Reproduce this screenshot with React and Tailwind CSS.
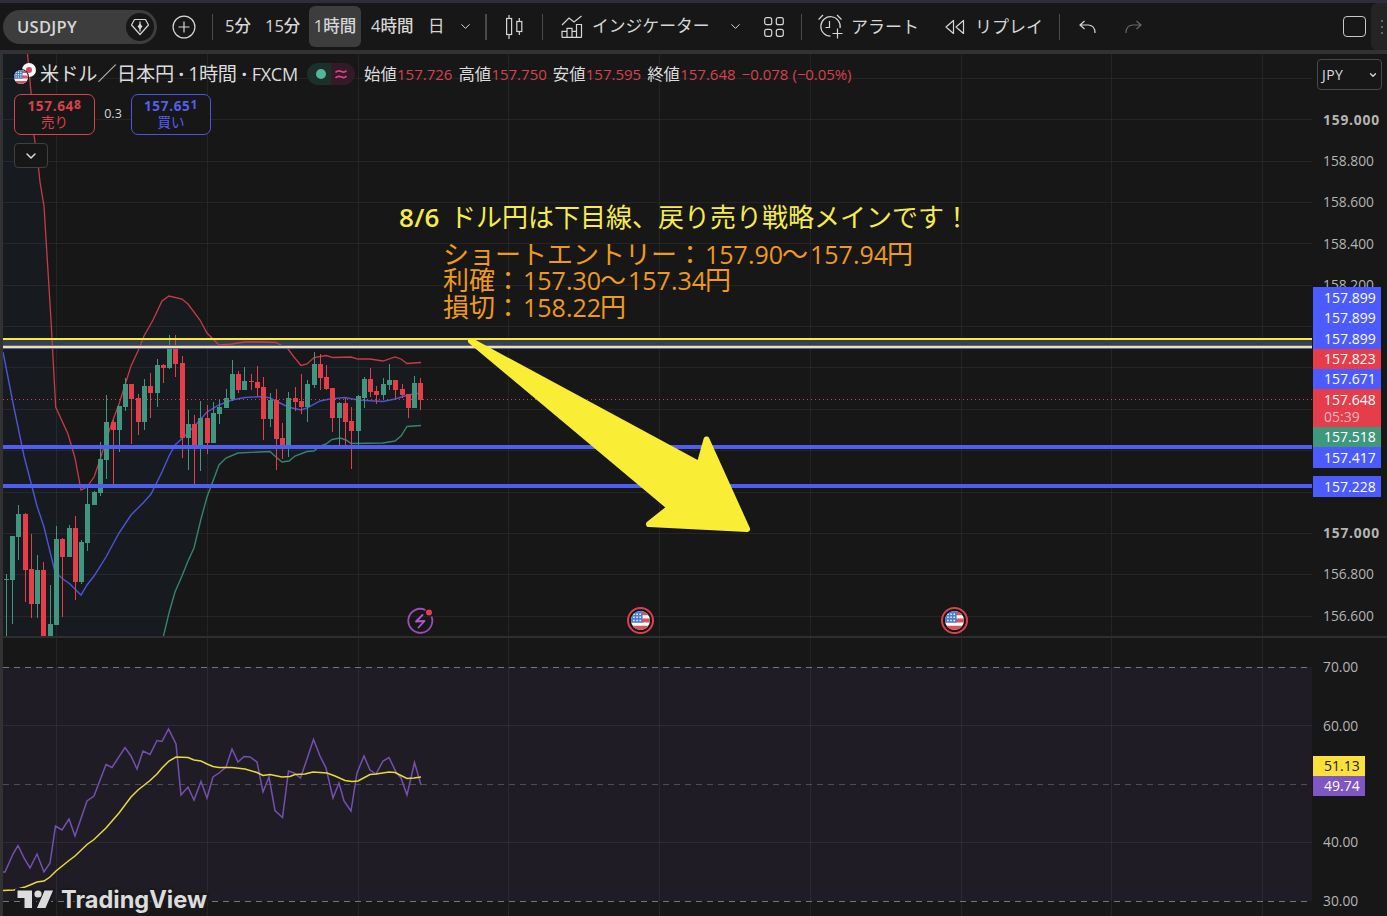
import { ChevronDown } from 'lucide-react';

// [high, low, bodyTop, bodyBottom, up]
const candles = [
  [574, 636, 579, 580, 1], [536, 624, 536, 580, 1], [505, 560, 514, 537, 1], [513, 602, 514, 570, 0],
  [534, 618, 569, 604, 0], [555, 618, 570, 604, 1], [562, 636, 570, 636, 0], [585, 636, 624, 636, 1],
  [526, 625, 539, 625, 1], [538, 617, 539, 557, 0], [525, 557, 528, 557, 1], [516, 600, 528, 582, 0],
  [540, 584, 542, 582, 1], [486, 551, 504, 543, 1], [491, 505, 492, 505, 1], [442, 496, 459, 493, 1],
  [395, 479, 422, 460, 1], [420, 485, 422, 430, 0], [406, 452, 406, 430, 1], [378, 411, 384, 407, 1],
  [384, 444, 384, 399, 0], [394, 435, 398, 422, 0], [379, 430, 386, 422, 1], [373, 418, 386, 393, 0],
  [359, 407, 365, 393, 1], [364, 383, 365, 368, 0], [335, 369, 348, 368, 1], [335, 377, 348, 364, 0],
  [356, 458, 363, 438, 0], [410, 470, 424, 438, 1], [415, 485, 424, 446, 0], [401, 471, 418, 446, 1],
  [405, 454, 418, 443, 0], [402, 443, 413, 443, 1], [399, 424, 407, 414, 1], [389, 408, 398, 408, 1],
  [360, 401, 374, 399, 1], [371, 393, 374, 390, 0], [367, 390, 381, 390, 1], [374, 390, 381, 382, 0],
  [366, 396, 382, 388, 0], [377, 440, 387, 419, 0], [393, 427, 400, 419, 1], [389, 470, 400, 439, 0],
  [423, 459, 438, 446, 0], [392, 457, 398, 446, 1], [387, 411, 398, 402, 0], [374, 414, 401, 407, 0],
  [380, 422, 384, 407, 1], [352, 388, 364, 385, 1], [354, 390, 364, 378, 0], [365, 390, 377, 389, 0],
  [388, 432, 388, 418, 0], [402, 446, 403, 418, 1], [398, 445, 403, 422, 0], [407, 469, 421, 431, 0],
  [395, 446, 396, 431, 1], [377, 408, 379, 398, 1], [368, 397, 379, 392, 0], [386, 404, 391, 395, 0],
  [378, 400, 384, 395, 1], [364, 390, 380, 385, 1], [380, 399, 380, 390, 0], [384, 398, 389, 395, 0],
  [394, 418, 394, 408, 0], [376, 408, 383, 408, 1], [378, 410, 383, 400, 0],
];

const upperBand =
  '27.5,54 31,92 34,135 38,163 40,182 44,206 51,320 55.7,407 68,434 75,458 81,490 87,487 94,477 100,460 106,440 113,420 119,404 125,385 131,366 138,351 144,336 153,320 162,301 169,296 182,299 188,304 200,320 207,333 219,345 232,344 245,342 263,342 276,342.5 288,349 294,357 301,365.5 307,364 314,357.5 326,355.5 333,357.5 351,357 358,359 370,359 383,361 395,357 401,359 407,363.5 421,362.5';
const midBand =
  '3,352 13,403 24,456 37,506 44,527 55,572 63,579 70,584 81,595 87,585 94,576 106,557 119,533 131,515 144,502 151,494 162,472 169,456 175,445 188,433 200,420 207,412 219,405 232,400 245,397.5 263,396.5 270,398 282,404 288,407 301,410 307,408 320,401 330,399 345,397.5 358,400 383,401.5 395,399 408,395 414,394 421,393';
const lowerBand =
  '163.5,636 169,613 175,592 182,576 188,561 194,548 201,519 207,497 219,465 226,458 238,453 270,451.5 276,457 282,462 289,461 295,456 307,451.5 314,451 320,446 326,444 332,439.5 340,438 346,440 351,443.5 383,443 395,441 401,436 407,426.5 421,425.5';
const bandFill = `${upperBand} ${lowerBand.split(' ').reverse().join(' ')} 3,636 3,54`;

const rsiLine =
  '3,872 5,872 13,854 18,845.5 24,858 30,868 37,854 44,872 50,863 55.5,826 62,830 69,819 75,836 87,801 94,796 106,764.5 112,767.5 125,747.5 131,756 137,769 143,751 150,754.5 157,740.5 162,741.5 168.5,729 176,744 181,795 188,787 194,800 201,781.5 207,798 213,777 219,773 226,767 232,749 238,762 244,756.5 250,757 257,762 263,792 269,777 275,810.5 282.5,817.5 288.5,771 294,773 300.5,778 307,759 313.5,739.5 320,756 326,768 333,798 339,783 344,801 351,811 357,773 364,756 370,770 376,774 383,761 389,757.5 396,772 401,778 407,795 414.5,762.5 421,785';
const rsiAverage =
  '3,890.5 14,890 25,887 30,885 37,882 44,881 50,877 56,871 69,860.5 75,856 87,844.5 94,839.5 106,828 119,813 131,797 138,790 150,780.5 157,774 162,768 169,761 176,757 188,757.5 194,760 201,761 207,764 213,766.5 219,767.5 232,767.5 245,769 257,772.5 263,775.5 270,774.5 282,777 290,776.5 295,774.5 305,774 313,772 327,773 335,776 345,780.5 352,781.5 358,781 370,774.5 376,774 389,772 395,772.5 401,775.5 407,778.5 414,778 421,777';

const gridX = [56, 207, 358, 508, 659, 810, 961, 1111, 1262];
const gridY = [78, 119, 161, 202, 243, 285, 326, 367, 409, 450, 492, 533, 574, 616];

// empty rows sit behind the price tags
const ticks = ['159.000', '158.800', '158.600', '158.400', '158.200', '', '', '', '', '', '157.000', '156.800', '156.600'];

const ohlc = [
  ['始値', '157.726'],
  ['高値', '157.750'],
  ['安値', '157.595'],
  ['終値', '157.648'],
];

function PriceChart() {
  return (
    <svg width="1309" height="582" viewBox="3 54 1309 582" className="block">
      <polygon points={bandFill} fill="#171b1f" />
      <g fill="#ffffff" fillOpacity="0.06" shapeRendering="crispEdges">
        {gridX.map((x) => <rect key={x} x={x} y="54" width="1" height="582" />)}
        {gridY.map((y) => <rect key={y} x="3" y={y} width="1309" height="1" />)}
      </g>
      {/* entry zone */}
      <rect x="3" y="340" width="1309" height="5" fill="#3a3e49" />
      <polyline points={upperBand} fill="none" stroke="#c93a4a" strokeWidth="1.3" />
      <polyline points={midBand} fill="none" stroke="#4c55d6" strokeWidth="1.4" />
      <polyline points={lowerBand} fill="none" stroke="#37836d" strokeWidth="1.4" />
      <g shapeRendering="crispEdges">
        {candles.map(([high, low, top, bottom, up], i) => {
          const x = Math.floor(6.22 + i * 6.283);
          return (
            <g key={i} fill={up ? '#41967f' : '#e63d4b'}>
              <rect x={x} y={high} width="1" height={low - high} />
              <rect x={x - 2} y={top} width="5" height={bottom - top} />
            </g>
          );
        })}
        {/* last price */}
        <line x1="3" x2="1312" y1="399.5" y2="399.5" stroke="#c94656" strokeDasharray="1 3" />
        <rect x="3" y="338" width="1309" height="2" fill="#f5ec3c" />
        <rect x="3" y="345" width="1309" height="4" fill="#4f5cd8" />
        <rect x="3" y="346" width="1309" height="2" fill="#f3e873" />
        {/* take profit levels */}
        <rect x="3" y="445" width="1309" height="4" fill="#4f5df0" />
        <rect x="3" y="484" width="1309" height="4" fill="#4f5df0" />
      </g>
      <polygon
        points="471,341 699.5,464.5 706.5,439.5 747,529 649,524 670,507.5"
        fill="#f9ee35"
        stroke="#f9ee35"
        strokeWidth="6"
        strokeLinejoin="round"
      />
    </svg>
  );
}

function RsiChart() {
  return (
    <svg width="1309" height="278" viewBox="3 638 1309 278" className="block">
      <rect x="3" y="667" width="1309" height="234" fill="#201c26" />
      <g fill="#ffffff" fillOpacity="0.06" shapeRendering="crispEdges">
        {gridX.map((x) => <rect key={x} x={x} y="638" width="1" height="278" />)}
        <rect x="3" y="725" width="1309" height="1" />
        <rect x="3" y="842" width="1309" height="1" />
      </g>
      <g strokeDasharray="6 5" shapeRendering="crispEdges">
        <line x1="3" x2="1308" y1="667.5" y2="667.5" stroke="#77757b" />
        <line x1="3" x2="1308" y1="784.5" y2="784.5" stroke="#4f4c55" />
        <line x1="3" x2="1308" y1="901.5" y2="901.5" stroke="#77757b" />
      </g>
      <polyline points={rsiLine} fill="none" stroke="#7450ae" strokeWidth="1.5" />
      <polyline points={rsiAverage} fill="none" stroke="#e8da3c" strokeWidth="1.5" />
      <g fill="#dcdcdc" stroke="#1b191e" strokeWidth="5" strokeLinejoin="round" paintOrder="stroke">
        <path d="M17.500 890.500H32V908H24.500V898H17.500Z" />
        <path d="M44.500 890.500H53L45.500 908H37Z" />
        <circle cx="38" cy="894" r="3.600" strokeWidth="2" />
        <text x="61" y="908" textLength="146" lengthAdjust="spacingAndGlyphs" className="font-['Inter'] text-[24px] font-bold">
          TradingView
        </text>
      </g>
    </svg>
  );
}

function FlagUs({ size }) {
  return (
    <svg width={size} height={size} viewBox="0 0 18 18">
      <clipPath id="usClip"><circle cx="9" cy="9" r="9" /></clipPath>
      <g clipPath="url(#usClip)">
        <rect width="18" height="18" fill="#fff" />
        <path d="M0 1h18v3H0zM0 7h18v4H0zM0 14h18v4H0z" fill="#dd5258" />
        <rect width="11" height="11" fill="#4a80d4" />
        <path d="M2 3h1.500M5 3h1.500M8 3h1.500M2 6h1.500M5 6h1.500M8 6h1.500M2 9h1.500M5 9h1.500M8 9h1.500" stroke="#e8f0ff" strokeWidth="1.400" />
      </g>
    </svg>
  );
}

function EventFlag() {
  return (
    <div className="flex size-[27px] items-center justify-center rounded-full border-2 border-[#d6434f] bg-[#171717]">
      <FlagUs size={19} />
    </div>
  );
}

function Divider({ className }) {
  return <div className={`h-[26px] shrink-0 bg-[#4a4a4a] ${className}`} />;
}

function Toolbar() {
  return (
    <div className="flex h-[47px] items-center bg-[#171717] text-[16.5px] leading-none text-[#d6d6d6]">
      <div className="ml-[3px] flex h-[34px] w-[154px] shrink-0 items-center justify-between rounded-full bg-[#3d3d3d] pr-[3px] pl-[14px]">
        <span className="pt-px text-[16.5px] font-semibold tracking-[0.3px]">USDJPY</span>
        <span className="flex size-[28px] items-center justify-center rounded-full bg-[#171717]">
          <svg width="20" height="18" viewBox="0 0 20 18" fill="none" stroke="currentColor" strokeWidth="1.200">
            <path d="M4.500 1.500h11L18.500 7 10 16.500 1.500 7z" strokeLinejoin="round" />
            <path d="M10 3.500v10" />
            <path d="M10 5.500l2.500 3-2.500 3-2.500-3z" fill="currentColor" stroke="none" />
          </svg>
        </span>
      </div>
      <svg className="ml-[15px] shrink-0" width="24" height="24" viewBox="0 0 24 24" fill="none" stroke="currentColor" strokeWidth="1.200">
        <circle cx="12" cy="12" r="10.900" />
        <path d="M12 6.500v11M6.500 12h11" />
      </svg>
      <Divider className="ml-4 w-px" />

      <span className="ml-[12px] w-[40px] shrink-0 font-medium">5分</span>
      <span className="w-[44px] shrink-0 font-medium whitespace-nowrap">15分</span>
      <span className="flex h-[41px] w-[52px] shrink-0 items-center justify-center rounded-md bg-[#3d3d3d] font-medium whitespace-nowrap">1時間</span>
      <span className="ml-[10px] w-[57px] shrink-0 font-medium whitespace-nowrap">4時間</span>
      <span className="w-[29px] shrink-0">日</span>
      <ChevronDown className="ml-px shrink-0" size={15} strokeWidth={1.6} />
      <Divider className="ml-[12px] w-[2px]" />

      <svg className="ml-[19px] shrink-0" width="17" height="24" viewBox="0 0 17 24" fill="none" stroke="currentColor" strokeWidth="1.200">
        <rect x="0.600" y="3.500" width="5" height="16" />
        <path d="M3 0v3.500M3 19.500V24M13.300 3v3.500M13.300 16.500V20" />
        <rect x="10.800" y="6.500" width="5" height="10" />
      </svg>
      <Divider className="ml-[19px] w-px" />

      <svg className="ml-[18px] shrink-0" width="22" height="24" viewBox="0 0 22 24" fill="none" stroke="currentColor" strokeWidth="1.200">
        <path d="M1 10l7-7 5 4 7.500-6" />
        <path d="M1 22.400v-6h5v6M6 16.400v-3h5v9M11 16.400h5M15.500 22.400V9.500h5v13M1 22.400h19.500" />
      </svg>
      <span className="ml-[9px] w-[128px] shrink-0 text-[16.8px] whitespace-nowrap">インジケーター</span>
      <ChevronDown className="ml-[8px] shrink-0" size={15} strokeWidth={1.6} />
      <svg className="ml-[21px] shrink-0" width="20" height="20" viewBox="0 0 20 20" fill="none" stroke="currentColor" strokeWidth="1.200">
        <rect x="0.700" y="0.700" width="7" height="7" rx="2" />
        <rect x="12.300" y="0.700" width="7" height="7" rx="2" />
        <rect x="0.700" y="12.300" width="7" height="7" rx="2" />
        <rect x="12.300" y="12.300" width="7" height="7" rx="2" />
      </svg>
      <Divider className="ml-[17px] w-px" />

      <svg className="ml-[16px] shrink-0" width="25" height="25" viewBox="0 0 25 25" fill="none" stroke="currentColor" strokeWidth="1.200">
        <path d="M12.500 22.100a9.700 9.700 0 1 1 9.600-8.100" />
        <path d="M11.500 7v6.500H7.500M0.600 5.500L5 1M19 1l4.500 4.500M19.500 14.500v10M14.500 19.500h10" />
      </svg>
      <span className="ml-[8px] w-[77px] shrink-0 text-[17px] whitespace-nowrap">アラート</span>
      <svg className="ml-[17px] shrink-0" width="20" height="16" viewBox="0 0 20 16" fill="none" stroke="currentColor" strokeWidth="1.200" strokeLinejoin="round">
        <path d="M8.500 1.500v13L1 8zM18.500 1.500v13L11 8z" />
      </svg>
      <span className="ml-[10px] w-[77px] shrink-0 text-[17px] whitespace-nowrap">リプレイ</span>
      <Divider className="ml-[7px] w-px" />

      <svg className="ml-[19px] shrink-0" width="18" height="14" viewBox="0 0 18 14" fill="none" stroke="currentColor" strokeWidth="1.200">
        <path d="M5.500 1L1 5l4.500 4M1 5h8.500q6.500.5 6.500 8" />
      </svg>
      <svg className="ml-[27px] shrink-0 text-[#686868]" width="18" height="14" viewBox="0 0 18 14" fill="none" stroke="currentColor" strokeWidth="1.200">
        <path d="M12.500 1L17 5l-4.500 4M17 5H8.500Q2 5.500 2 13" />
      </svg>

      <div className="ml-auto h-[21px] w-[23px] shrink-0 rounded-[4px] border-[1.5px] border-[#c8c8c8]" />
      <div className="ml-[5px] flex h-full w-4 shrink-0 flex-col items-center justify-center gap-[4px] rounded-l-md bg-[#242424] pl-[6px]">
        <i className="size-[2px] bg-[#666]" />
        <i className="size-[2px] bg-[#666]" />
        <i className="size-[2px] bg-[#666]" />
      </div>
    </div>
  );
}

function Legend() {
  return (
    <div className="absolute top-0 left-0 flex flex-col pl-[11px]">
      <div className="mt-[8px] flex h-[24px] items-center text-[15px] leading-none whitespace-nowrap text-[#dcdcdc]">
        <div className="relative size-[22px] shrink-0">
          <div className="absolute top-0 right-0 flex size-[14px] items-center justify-center rounded-full bg-white">
            <div className="size-[6px] rounded-full bg-[#e0405a]" />
          </div>
          <div className="absolute bottom-0 -left-px flex size-[16px] items-center justify-center rounded-full bg-[#171717]">
            <FlagUs size={14} />
          </div>
        </div>
        <div className="ml-[4px] flex w-[267px] shrink-0 items-center text-[19.2px]">
          <span>米ドル／日本円</span>
          <span className="w-[14px] text-center font-bold">·</span>
          <span className="tracking-[-0.3px]">1時間</span>
          <span className="w-[15px] text-center font-bold">·</span>
          <span className="text-[18px] font-medium tracking-[-0.3px]">FXCM</span>
        </div>
        <div className="flex h-[22px] w-[48px] shrink-0 overflow-hidden rounded-full">
          <div className="flex w-1/2 items-center justify-center bg-[#1b3029] pl-1">
            <div className="size-[10px] rounded-full bg-[#56b49c]" />
          </div>
          <div className="flex w-1/2 items-center justify-center bg-[#331a27] pr-1">
            <svg width="12" height="11" viewBox="0 0 12 11" fill="none" stroke="#e0418a" strokeWidth="1.700">
              <path d="M.5 3.500C3 1 5 1.800 6.500 2.600S9.500 4 11.500 1.500M.5 9C3 6.500 5 7.300 6.500 8.100S9.500 9.500 11.500 7" />
            </svg>
          </div>
        </div>
        <div className="ml-[9px] flex items-center text-[#d8414e]">
          {ohlc.map(([label, value]) => (
            <div key={label} className="flex w-[94.400px] items-center">
              <span className="w-[33px] text-[16.4px] text-[#dcdcdc]">{label}</span>
              <span>{value}</span>
            </div>
          ))}
          <span className="w-[51px] text-[15px]">−0.078</span>
          <span className="text-[15px] tracking-[-0.1px]">(−0.05%)</span>
        </div>
      </div>

      <div className="mt-[8px] flex items-center">
        <div className="flex h-[41px] w-[81px] flex-col items-center justify-center rounded-[7px] border border-[#d8414e] bg-[#171717] text-[#d8414e]">
          <div className="flex text-[13.500px] leading-[15px] font-bold tracking-[0.7px]">
            157.64<span className="relative -top-[2px] text-[12px]">8</span>
          </div>
          <div className="text-[13.500px] leading-[16px]">売り</div>
        </div>
        <div className="w-[36px] text-center text-[12.500px] text-[#d6d6d6]">0.3</div>
        <div className="flex h-[41px] w-[80px] flex-col items-center justify-center rounded-[7px] border border-[#4c55e0] bg-[#171717] text-[#555ef0]">
          <div className="flex text-[13.500px] leading-[15px] font-bold tracking-[0.7px]">
            157.65<span className="relative -top-[2px] text-[12px]">1</span>
          </div>
          <div className="text-[13.500px] leading-[16px]">買い</div>
        </div>
      </div>

      <div className="mt-[8px] flex h-[25px] w-[34px] items-center justify-center rounded-[4px] border border-[#3f3f3f] bg-[#171717] text-[#dcdcdc]">
        <ChevronDown size={16} strokeWidth={2.2} />
      </div>
    </div>
  );
}

function Notes() {
  return (
    <div className="absolute top-[150px] left-[396px] leading-none whitespace-nowrap">
      <div className="flex h-[26px] items-center text-[26px] text-[#f5ec4a]">
        <span className="w-[51px] text-[26px] font-semibold tracking-[0.3px]">8/6</span>
        <span>ドル円は下目線、戻り売り戦略メインです！</span>
      </div>
      <div className="mt-[11px] ml-[44px] text-[26px] leading-[26.400px] text-[#ee9a1a]">
        <div className="flex">ショートエントリー：<Num>157.90</Num>〜<Num>157.94</Num>円</div>
        <div className="flex">利確：<Num>157.30</Num>〜<Num>157.34</Num>円</div>
        <div className="flex">損切：<Num>158.22</Num>円</div>
      </div>
    </div>
  );
}

function Num({ children }) {
  return <span className="w-[79px] pl-[2px] text-[25px] font-medium">{children}</span>;
}

function Tag({ color, className = '', children }) {
  return <div className={`flex items-center pl-[11px] ${color} ${className}`}>{children}</div>;
}

function PriceAxis() {
  return (
    <div className="relative w-[72px] shrink-0 text-[13.800px] leading-none text-[#b4b4b4]">
      <div className="pt-[45px]">
        {ticks.map((t, i) => (
          <div key={i} className={`flex h-[41.320px] items-center pl-[8px] ${t === '159.000' || t === '157.000' ? 'font-bold tracking-[0.8px]' : ''}`}>
            {t}
          </div>
        ))}
      </div>
      <div className="absolute top-[5px] left-[2px] flex h-[31px] w-[65px] items-center justify-between rounded-[4px] border border-[#4a4a4a] bg-[#171717] pr-[3px] pl-[4px] text-[14px] tracking-[0.4px] text-[#dcdcdc]">
        JPY
        <ChevronDown size={10} strokeWidth={3} />
      </div>
      <div className="absolute top-[233px] -left-[2px] w-[68px] text-[14px] font-medium text-white">
        <Tag color="bg-[#4c5bff]" className="h-[21px]">157.899</Tag>
        <Tag color="bg-[#4c5bff]" className="h-[20px]">157.899</Tag>
        <Tag color="bg-[#4c5bff]" className="h-[21px]">157.899</Tag>
        <Tag color="bg-[#e63d4b]" className="h-[20px]">157.823</Tag>
        <Tag color="bg-[#4c5bff]" className="h-[20px]">157.671</Tag>
        <div className="flex h-[38px] flex-col justify-center gap-[3px] bg-[#e63d4b] pl-[11px]">
          <span>157.648</span>
          <span className="text-[14px] text-[#f5b8bd]">05:39</span>
        </div>
        <Tag color="bg-[#3f987c]" className="h-[20px]">157.518</Tag>
        <Tag color="bg-[#4c5bff]" className="h-[21px]">157.417</Tag>
        <Tag color="bg-[#4c5bff]" className="mt-[8px] h-[21px]">157.228</Tag>
      </div>
    </div>
  );
}

function RsiAxis() {
  return (
    <div className="relative w-[72px] shrink-0 text-[13.800px] leading-none text-[#b4b4b4]">
      {['70.00', '60.00', '', '40.00', '30.00'].map((t, i) => (
        <div key={i} className="flex h-[58.400px] items-center pl-[8px]">{t}</div>
      ))}
      <div className="absolute top-[118px] -left-[2px] w-[52px] text-[14px] font-medium">
        <Tag color="bg-[#fbe13a]" className="h-[20px] text-[#1c1c1c]">51.13</Tag>
        <Tag color="bg-[#7e57c2]" className="h-[20px] text-white">49.74</Tag>
      </div>
    </div>
  );
}

export default function App() {
  return (
    <div className="flex h-[916px] w-[1387px] flex-col overflow-hidden bg-[#171717] font-['Open_Sans','Noto_Sans_CJK_JP',sans-serif]">
      <div className="h-[3px] shrink-0 bg-[#2e2d39]" />
      <Toolbar />
      <div className="flex min-h-0 flex-1 flex-col border-t-4 border-l-[3px] border-[#323232]">
        <div className="flex h-[582px] shrink-0 overflow-hidden">
          <div className="relative w-[1312px] shrink-0">
            <PriceChart />
            <Legend />
            <Notes />
            <div className="absolute top-[553px] left-[404px]">
              <svg width="28" height="28" viewBox="0 0 28 28" fill="none">
                <path d="M18.500 3A12 12 0 1 0 24.500 9.500" stroke="#9c4db8" strokeWidth="1.800" />
                <path d="M15.500 8l-6.500 6.500 8.500-.5-6 6.500" stroke="#b456d0" strokeWidth="1.800" strokeLinejoin="round" strokeLinecap="round" />
                <circle cx="22" cy="5.500" r="3" fill="#e63d4b" />
              </svg>
            </div>
            <div className="absolute top-[553px] left-[624px]"><EventFlag /></div>
            <div className="absolute top-[553px] left-[938px]"><EventFlag /></div>
          </div>
          <PriceAxis />
        </div>
        <div className="h-[2px] shrink-0 bg-[#2e2e2e]" />
        <div className="flex h-[278px] shrink-0 overflow-hidden">
          <div className="w-[1312px] shrink-0">
            <RsiChart />
          </div>
          <RsiAxis />
        </div>
      </div>
    </div>
  );
}
